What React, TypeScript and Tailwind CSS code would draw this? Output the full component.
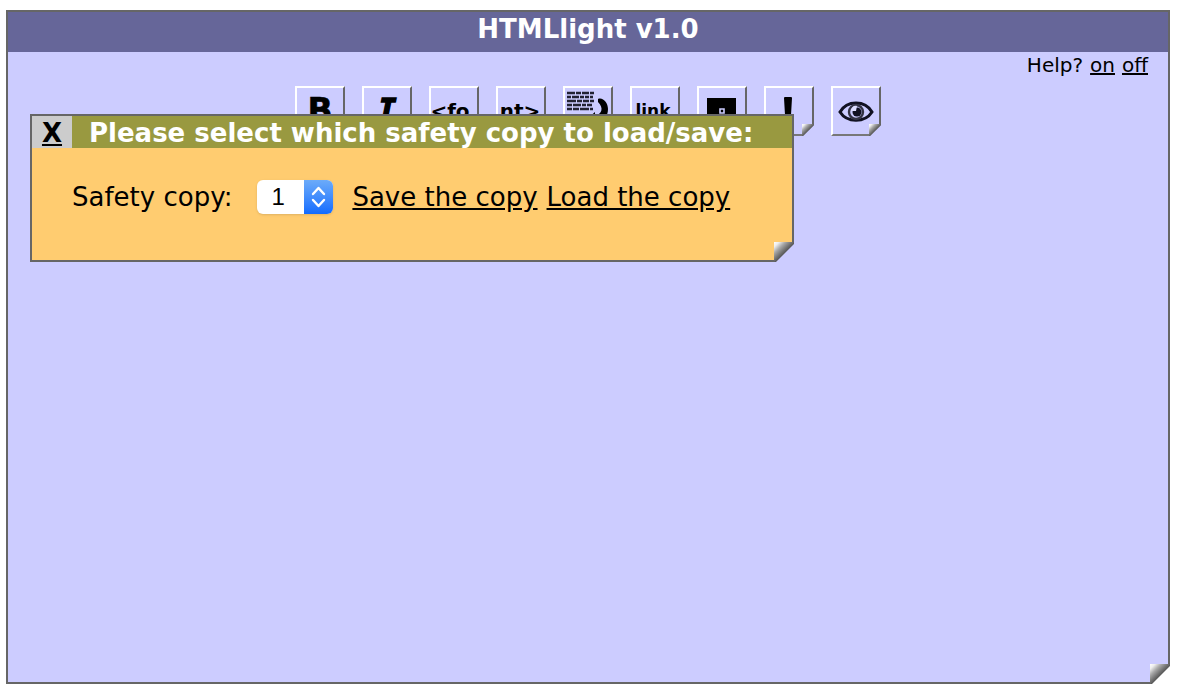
import { useState, type ReactNode } from "react";

function Fold({ id, outside }: { id: string; outside: string }) {
  return (
    <svg viewBox="0 0 20 20" className="h-full w-full" aria-hidden="true">
      <defs>
        <linearGradient id={id} gradientUnits="userSpaceOnUse" x1="0" y1="0" x2="10.5" y2="10.5">
          <stop offset="0" stopColor="#ffffff" />
          <stop offset="0.25" stopColor="#ededed" />
          <stop offset="0.55" stopColor="#a8a8a8" />
          <stop offset="0.85" stopColor="#747474" />
          <stop offset="1" stopColor="#5c5c5c" />
        </linearGradient>
      </defs>
      <rect width="20" height="20" fill={outside} />
      <path d="M0 0H20V2L2 20H0Z" fill={`url(#${id})`} />
    </svg>
  );
}

function ToolButton({ label, children }: { label: string; children: ReactNode }) {
  return (
    <button
      type="button"
      aria-label={label}
      className="relative h-[50px] w-[50px] border-2 border-t-white border-r-[#666666] border-b-[#777777] border-l-white bg-[#ccccff] font-bold text-black"
    >
      <svg viewBox="0 0 46 46" className="h-full w-full" aria-hidden="true">
        {children}
      </svg>
      <span className="absolute -right-0.5 -bottom-0.5 h-3 w-3">
        <Fold id={`fold-${label}`} outside="#ccccff" />
      </span>
    </button>
  );
}

function Toolbar() {
  return (
    <div className="flex justify-center gap-[17px]">
      <ToolButton label="Bold">
        <text x="23" y="34" textAnchor="middle" fontSize="33" stroke="#000" strokeWidth="0.6">B</text>
      </ToolButton>
      <ToolButton label="Italic">
        <text x="23" y="33" textAnchor="middle" fontSize="32" fontStyle="italic" fontFamily="DejaVu Sans Mono, monospace" stroke="#000" strokeWidth="1.4">I</text>
      </ToolButton>
      <ToolButton label="Font-open">
        <text x="19" y="30" textAnchor="middle" fontSize="20">&lt;fo</text>
      </ToolButton>
      <ToolButton label="Font-close">
        <text x="22" y="30" textAnchor="middle" fontSize="20">nt&gt;</text>
      </ToolButton>
      <ToolButton label="Wrap">
        <g stroke="#222233" strokeWidth="2.4" fill="none">
          <path d="M2 5H29" strokeDasharray="8 1 5 1 7 1" />
          <path d="M2 9H28" strokeDasharray="4 1 7 1 4 1" />
          <path d="M2 13H29" strokeDasharray="9 1 5 1 6 1" />
          <path d="M2 17H28" strokeDasharray="5 1 8 1 4 1" />
          <path d="M2 21H28" strokeDasharray="5 1 6 1 9 1" />
        </g>
        <path d="M33 11C38 9 43 15 43 21C43 29 38 34 31 35V40L21 32L30 24V28C37 26 39 20 33 14Z" fill="#000" />
      </ToolButton>
      <ToolButton label="Link">
        <text x="21" y="29" textAnchor="middle" fontSize="17">link</text>
      </ToolButton>
      <ToolButton label="Image">
        <path d="M8 10H37V36H8Z" fill="#000" />
        <path d="M21 21H25V25H21Z" stroke="#ccccff" strokeWidth="1.6" fill="none" />
      </ToolButton>
      <ToolButton label="Important">
        <path d="M18 10Q18 9 19 9H25Q26 9 26 10L25 27H19ZM19 31H25V37H19Z" fill="#000" />
      </ToolButton>
      <ToolButton label="Preview">
        <path d="M7 24C14 12 32 12 39 24C32 35 14 35 7 24Z" fill="none" stroke="#111122" strokeWidth="3" />
        <circle cx="23" cy="24" r="7" fill="none" stroke="#333344" strokeWidth="2.4" />
        <circle cx="24" cy="24" r="4.5" fill="#111122" />
        <path d="M18 23C18 19 21 17 24 18L23 23Z" fill="#ddddff" />
      </ToolButton>
    </div>
  );
}

function SafetyCopyDialog({ onClose }: { onClose: () => void }) {
  return (
    <section
      role="dialog"
      aria-labelledby="dialog-title"
      className="absolute top-[102px] left-[22px] w-[764px] border-2 border-[#666666] bg-[#ffcc70] text-[26px] leading-8"
    >
      <div className="flex h-8 bg-[#999940] leading-[34px]">
        <button type="button" onClick={onClose} className="w-10 bg-[#cccccc] font-bold underline">
          X
        </button>
        <h2 id="dialog-title" className="pl-[17px] font-bold whitespace-nowrap text-white">
          Please select which safety copy to load/save:
        </h2>
      </div>
      <form className="flex items-center px-10 pt-8 pb-[46px] whitespace-nowrap">
        <label htmlFor="copy" className="mr-[25px]">Safety copy:</label>
        <span className="relative mr-[19px] h-[34px] w-[76px]">
          <select
            id="copy"
            defaultValue="1"
            className="h-full w-full appearance-none rounded-md bg-white pl-3.5 font-['Liberation_Sans',sans-serif] text-[24px] leading-[34px] shadow-sm"
          >
            <option>1</option>
            <option>2</option>
            <option>3</option>
          </select>
          <span className="pointer-events-none absolute inset-y-0 right-0 w-[29px] rounded-r-md bg-linear-to-b from-[#6cabf9] to-[#116bfe]">
            <svg viewBox="0 0 29 34" className="h-full w-full" fill="none" stroke="white" strokeWidth="2.4" strokeLinecap="round" strokeLinejoin="round" aria-hidden="true">
              <path d="M9 14L14.5 8L20 14M9 20L14.5 26L20 20" />
            </svg>
          </span>
        </span>
        <a href="#save" className="mr-[9px] underline">Save the copy</a>
        <a href="#load" className="underline">Load the copy</a>
      </form>
      <span className="absolute -right-0.5 -bottom-0.5 h-5 w-5">
        <Fold id="fold-dialog" outside="#ccccff" />
      </span>
    </section>
  );
}

export default function App() {
  const [open, setOpen] = useState(true);
  return (
    <div className="flex min-h-screen flex-col bg-white pt-2.5 pr-3.5 pb-3 pl-1.5 font-['Verdana','DejaVu_Sans',sans-serif] text-black">
      <main className="relative flex-1 border-2 border-[#666666] bg-[#ccccff]">
        <h1 className="h-10 bg-[#666699] text-center text-[26px] leading-[34px] font-bold text-white">HTMLlight v1.0</h1>
        <p className="flex justify-end gap-[7px] pr-5 text-[20px] leading-[26px]">
          <span>Help?</span>
          <a href="#on" className="underline">on</a>
          <a href="#off" className="underline">off</a>
        </p>
        <div className="pt-2">
          <Toolbar />
        </div>
        {open && <SafetyCopyDialog onClose={() => setOpen(false)} />}
        <span className="absolute -right-0.5 -bottom-0.5 h-5 w-5">
          <Fold id="fold-window" outside="#ffffff" />
        </span>
      </main>
    </div>
  );
}
